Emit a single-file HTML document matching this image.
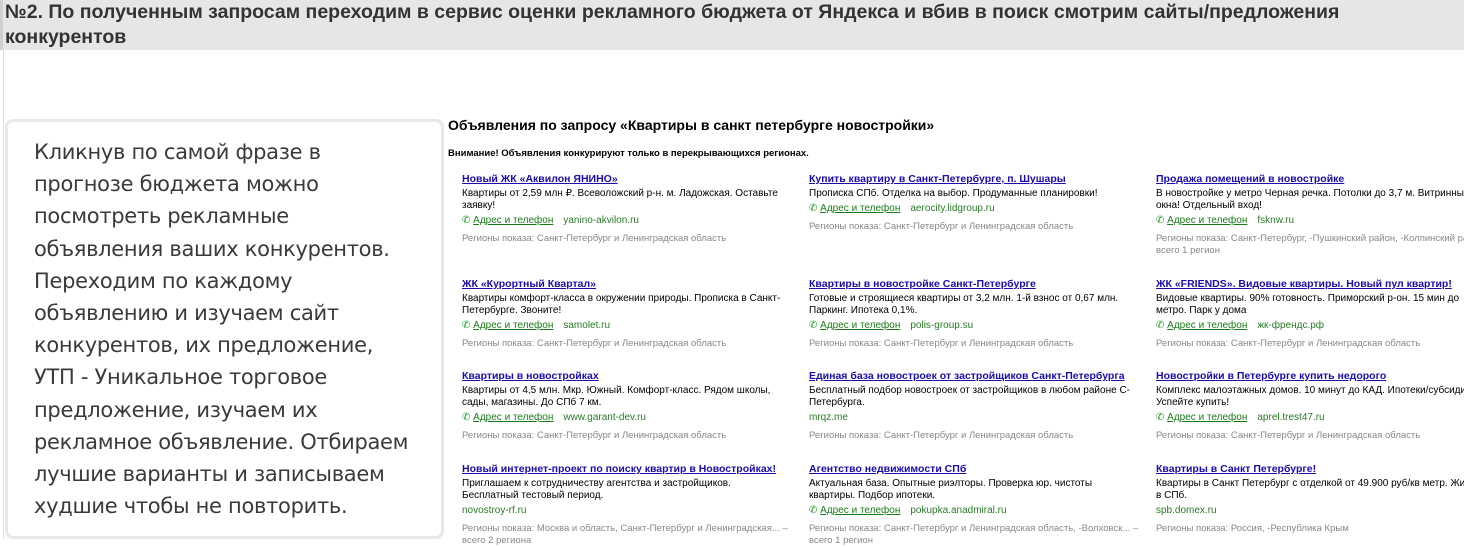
<!DOCTYPE html>
<html><head><meta charset="utf-8"><style>
*{margin:0;padding:0;box-sizing:border-box}
body{width:1464px;height:539px;overflow:hidden;background:#fff;font-family:"Liberation Sans","DejaVu Sans",sans-serif;position:relative}
.hd{position:absolute;left:0;top:0;width:1464px;height:50px;background:#e6e6e6;border-left:3px solid #d0d0d0;padding:0 0 0 2px;font:bold 19.5px/25px "Liberation Sans",sans-serif;color:#333;white-space:nowrap}
.lb{position:absolute;left:3px;top:50px;width:1px;height:489px;background:#ddd}
.box{position:absolute;left:5px;top:119px;width:439px;height:420px;border:3px solid #e8e8e8;border-radius:8px;background:#fff}
.box p{position:absolute;left:26px;top:14px;width:420px;font-family:"DejaVu Sans",sans-serif;font-size:21px;line-height:32.2px;color:#3a3a3a;white-space:nowrap;letter-spacing:-0.3px}
.t{position:absolute;left:448px;top:117px;font-weight:bold;font-size:14px;color:#000}
.w{position:absolute;left:448px;top:148px;font-weight:bold;font-size:9.5px;color:#000}
.ad{position:absolute;width:330px;font-size:10px;line-height:12px;color:#000}
.ad a{color:#1a0dab;font-weight:bold;text-decoration:underline;font-size:10.5px;display:block;margin-bottom:3px;white-space:nowrap}
.ad .c{color:#1a9a1a;margin-top:3px}
.ad .c u{color:#1a7a1a;margin-right:10px}
.ad .c span{color:#2a7a2a}
.ad .r{color:#888;font-size:9.5px;margin-top:6px}
</style></head><body>
<div class="hd">№2. По полученным запросам переходим в сервис оценки рекламного бюджета от Яндекса и вбив в поиск смотрим сайты/предложения<br>конкурентов</div>
<div class="lb"></div>
<div class="box"><p>Кликнув по самой фразе в<br>прогнозе бюджета можно<br>посмотреть рекламные<br>объявления ваших конкурентов.<br>Переходим по каждому<br>объявлению и изучаем сайт<br>конкурентов, их предложение,<br>УТП - Уникальное торговое<br>предложение, изучаем их<br>рекламное объявление. Отбираем<br>лучшие варианты и записываем<br>худшие чтобы не повторить.</p></div>
<div class="t">Объявления по запросу «Квартиры в санкт петербурге новостройки»</div>
<div class="w">Внимание! Объявления конкурируют только в перекрывающихся регионах.</div>

<div class="ad" style="left:462px;top:173px"><a>Новый ЖК «Аквилон ЯНИНО»</a>Квартиры от 2,59 млн ₽. Всеволожский р-н. м. Ладожская. Оставьте заявку!<div class="c">✆ <u>Адрес и телефон</u><span>yanino-akvilon.ru</span></div><div class="r">Регионы показа: Санкт-Петербург и Ленинградская область</div></div>
<div class="ad" style="left:809px;top:173px"><a>Купить квартиру в Санкт-Петербурге, п. Шушары</a>Прописка СПб. Отделка на выбор. Продуманные планировки!<div class="c">✆ <u>Адрес и телефон</u><span>aerocity.lidgroup.ru</span></div><div class="r">Регионы показа: Санкт-Петербург и Ленинградская область</div></div>
<div class="ad" style="left:1156px;top:173px"><a>Продажа помещений в новостройке</a>В новостройке у метро Черная речка. Потолки до 3,7 м. Витринные окна! Отдельный вход!<div class="c">✆ <u>Адрес и телефон</u><span>fsknw.ru</span></div><div class="r">Регионы показа: Санкт-Петербург, -Пушкинский район, -Колпинский ра...<br>всего 1 регион</div></div>

<div class="ad" style="left:462px;top:278px"><a>ЖК «Курортный Квартал»</a>Квартиры комфорт-класса в окружении природы. Прописка в Санкт-Петербурге. Звоните!<div class="c">✆ <u>Адрес и телефон</u><span>samolet.ru</span></div><div class="r">Регионы показа: Санкт-Петербург и Ленинградская область</div></div>
<div class="ad" style="left:809px;top:278px"><a>Квартиры в новостройке Санкт-Петербурге</a>Готовые и строящиеся квартиры от 3,2 млн. 1-й взнос от 0,67 млн. Паркинг. Ипотека 0,1%.<div class="c">✆ <u>Адрес и телефон</u><span>polis-group.su</span></div><div class="r">Регионы показа: Санкт-Петербург и Ленинградская область</div></div>
<div class="ad" style="left:1156px;top:278px"><a>ЖК «FRIENDS». Видовые квартиры. Новый пул квартир!</a>Видовые квартиры. 90% готовность. Приморский р-он. 15 мин до метро. Парк у дома<div class="c">✆ <u>Адрес и телефон</u><span>жк-френдс.рф</span></div><div class="r">Регионы показа: Санкт-Петербург и Ленинградская область</div></div>

<div class="ad" style="left:462px;top:370px"><a>Квартиры в новостройках</a>Квартиры от 4,5 млн. Мкр. Южный. Комфорт-класс. Рядом школы, сады, магазины. До СПб 7 км.<div class="c">✆ <u>Адрес и телефон</u><span>www.garant-dev.ru</span></div><div class="r">Регионы показа: Санкт-Петербург и Ленинградская область</div></div>
<div class="ad" style="left:809px;top:370px"><a>Единая база новостроек от застройщиков Санкт-Петербурга</a>Бесплатный подбор новостроек от застройщиков в любом районе С-Петербурга.<div class="c"><span>mrqz.me</span></div><div class="r">Регионы показа: Санкт-Петербург и Ленинградская область</div></div>
<div class="ad" style="left:1156px;top:370px"><a>Новостройки в Петербурге купить недорого</a>Комплекс малоэтажных домов. 10 минут до КАД. Ипотеки/субсидии. Успейте купить!<div class="c">✆ <u>Адрес и телефон</u><span>aprel.trest47.ru</span></div><div class="r">Регионы показа: Санкт-Петербург и Ленинградская область</div></div>

<div class="ad" style="left:462px;top:463px"><a>Новый интернет-проект по поиску квартир в Новостройках!</a>Приглашаем к сотрудничеству агентства и застройщиков.<br>Бесплатный тестовый период.<div class="c"><span>novostroy-rf.ru</span></div><div class="r">Регионы показа: Москва и область, Санкт-Петербург и Ленинградская... – всего 2 региона</div></div>
<div class="ad" style="left:809px;top:463px"><a>Агентство недвижимости СПб</a>Актуальная база. Опытные риэлторы. Проверка юр. чистоты квартиры. Подбор ипотеки.<div class="c">✆ <u>Адрес и телефон</u><span>pokupka.anadmiral.ru</span></div><div class="r">Регионы показа: Санкт-Петербург и Ленинградская область, -Волховск... – всего 1 регион</div></div>
<div class="ad" style="left:1156px;top:463px"><a>Квартиры в Санкт Петербурге!</a>Квартиры в Санкт Петербург с отделкой от 49.900 руб/кв метр. Жилье в СПб.<div class="c"><span>spb.domex.ru</span></div><div class="r">Регионы показа: Россия, -Республика Крым</div></div>
</body></html>
